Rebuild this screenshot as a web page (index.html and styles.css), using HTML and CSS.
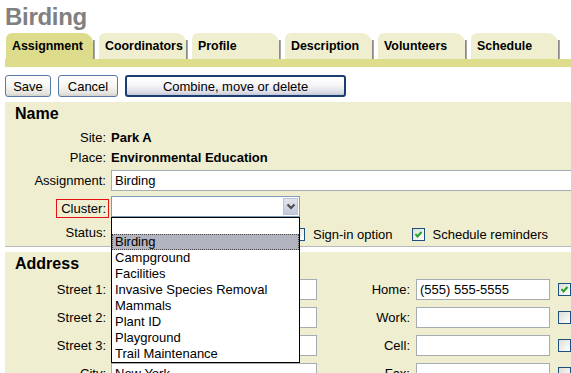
FILE: index.html
```html
<!DOCTYPE html>
<html>
<head>
<meta charset="utf-8">
<title>Birding</title>
<link rel="stylesheet" href="styles.css">
</head>
<body>
<h1 class="title">Birding</h1>
<nav class="tabs">
  <div class="tab active">Assignment</div>
  <div class="tab">Coordinators</div>
  <div class="tab">Profile</div>
  <div class="tab">Description</div>
  <div class="tab">Volunteers</div>
  <div class="tab">Schedule</div>
</nav>
<div class="tabbar"></div>
<div class="actions">
  <button class="btn btn-save">Save</button>
  <button class="btn btn-cancel">Cancel</button>
  <button class="btn btn-default">Combine, move or delete</button>
</div>
<section class="panel panel-name">
  <h2 class="panel-title">Name</h2>
  <div class="row text-row"><span class="label">Site:</span><span class="value">Park A</span></div>
  <div class="row text-row"><span class="label">Place:</span><span class="value">Environmental Education</span></div>
  <div class="row field-row"><span class="label">Assignment:</span><input class="input input-wide" value="Birding"></div>
  <div class="row field-row">
    <span class="label"><span class="label-error">Cluster:</span></span>
    <div class="select-wrap">
      <div class="select"><span class="select-btn"><svg width="10" height="7" viewBox="0 0 10 7"><polyline points="1.5,1.5 5,5 8.5,1.5" fill="none" stroke="#4a4a4a" stroke-width="2"/></svg></span></div>
      <ul class="dropdown">
        <li class="opt"></li>
        <li class="opt selected">Birding</li>
        <li class="opt">Campground</li>
        <li class="opt">Facilities</li>
        <li class="opt">Invasive Species Removal</li>
        <li class="opt">Mammals</li>
        <li class="opt">Plant ID</li>
        <li class="opt">Playground</li>
        <li class="opt">Trail Maintenance</li>
      </ul>
    </div>
  </div>
  <div class="row field-row">
    <span class="label">Status:</span>
    <div class="status-select"></div>
    <span class="check check-signin"></span><span class="check-label">Sign-in option</span>
    <span class="check checked check-sched"><svg width="11" height="11" viewBox="0 0 11 11"><polyline points="2.5,5 4.5,7.5 8.5,3" fill="none" stroke="#21a121" stroke-width="2"/></svg></span><span class="check-label">Schedule reminders</span>
  </div>
</section>
<section class="panel panel-address">
  <h2 class="panel-title">Address</h2>
  <div class="addr-grid">
    <span class="label">Street 1:</span><input class="input input-street">
    <span class="label">Home:</span><input class="input input-phone" value="(555) 555-5555">
    <span class="check checked check-phone"><svg width="11" height="11" viewBox="0 0 11 11"><polyline points="2.5,5 4.5,7.5 8.5,3" fill="none" stroke="#21a121" stroke-width="2"/></svg></span>

    <span class="label">Street 2:</span><input class="input input-street">
    <span class="label">Work:</span><input class="input input-phone">
    <span class="check check-phone"></span>

    <span class="label">Street 3:</span><input class="input input-street">
    <span class="label">Cell:</span><input class="input input-phone">
    <span class="check check-phone"></span>

    <span class="label">City:</span><input class="input input-street" value="New York">
    <span class="label">Fax:</span><input class="input input-phone">
    <span class="check check-phone"></span>
  </div>
</section>
</body>
</html>
```
FILE: styles.css
```css
html, body {
  margin: 0;
  padding: 0;
  overflow: hidden;
}
body {
  width: 571px;
  height: 373px;
  font-family: "Liberation Sans", Arial, sans-serif;
  font-size: 13px;
  color: #000;
  background: #fff;
}
.title {
  margin: 4px 0 0 5px;
  font-size: 24px;
  line-height: 26px;
  letter-spacing: -0.3px;
  font-weight: bold;
  color: #808080;
}
.tabs {
  display: flex;
  gap: 6px;
  margin: 3px 0 0 6px;
  height: 26px;
}
.tab {
  position: relative;
  width: 87px;
  height: 26px;
  box-sizing: border-box;
  padding-left: 6px;
  background: #efefd0;
  border-radius: 6px 10px 0 0;
  font-weight: bold;
  font-size: 12.4px;
  line-height: 26px;
  white-space: nowrap;
  overflow: visible;
}
.tab::after {
  content: "";
  position: absolute;
  right: -2px;
  top: 7px;
  bottom: 0;
  width: 2px;
  background: linear-gradient(to right, #7c7c7c, #b4b4b4);
}
.tab.active {
  background: #dcdc8c;
}
.tabbar {
  margin-left: 5px;
  height: 8px;
  background: #dedd8b;
}
.actions {
  display: flex;
  gap: 7px;
  margin: 8px 0 0 5px;
}
.btn {
  height: 22px;
  box-sizing: border-box;
  padding: 0;
  font-family: "Liberation Sans", Arial, sans-serif;
  font-size: 13px;
  color: #000;
  border: 1px solid #5a7aa8;
  border-radius: 3px;
  background: linear-gradient(#ffffff 0%, #f7f7f4 45%, #e6e5df 85%, #d2d1ca 100%);
}
.btn-save { width: 46px; }
.btn-cancel { width: 60px; }
.btn-default {
  width: 221px;
  border: 2px solid #1b3d72;
  background: linear-gradient(#ffffff 0%, #f6f6f8 45%, #dcdce6 85%, #c5c6d6 100%);
}
.panel {
  position: relative;
  margin: 5px 0 0 5px;
  background: #efeed1;
}
.panel-name {
  z-index: 2;
  padding-bottom: 1px;
  border-bottom: 1px solid #b9b9b9;
}
.panel-address {
  z-index: 1;
  height: 130px;
}
.panel-title {
  margin: 0 0 3px 0;
  padding: 2px 0 0 10px;
  font-size: 16px;
  line-height: 20px;
  font-weight: bold;
}
.row {
  display: flex;
  align-items: center;
}
.text-row { height: 20px; }
.field-row { height: 26px; }
.label {
  width: 101px;
  flex: none;
  text-align: right;
  white-space: nowrap;
}
.value {
  margin-left: 5px;
  font-weight: bold;
}
.label-error {
  display: inline-block;
  margin-top: 4px;
  margin-right: -3px;
  padding: 1px 2px 1px 4px;
  line-height: 15px;
  border: 1px solid #e81010;
}
.input {
  height: 21px;
  box-sizing: border-box;
  margin: 0;
  padding: 0 3px;
  border: 1px solid #a5acb2;
  background: #fff;
  font-family: "Liberation Sans", Arial, sans-serif;
  font-size: 13px;
  color: #000;
  outline: none;
}
.input-wide {
  margin-left: 5px;
  width: 470px;
  flex: none;
}
.select-wrap {
  position: relative;
  margin-left: 5px;
  width: 189px;
}
.select {
  height: 21px;
  box-sizing: border-box;
  border: 1px solid #7f9db9;
  background: #fff;
  display: flex;
  justify-content: flex-end;
  padding: 1px;
}
.select-btn {
  width: 15px;
  box-sizing: border-box;
  border: 1px solid #b9c2d8;
  background: linear-gradient(#e2e5ee, #c4c8d8);
  display: flex;
  align-items: center;
  justify-content: center;
}
.dropdown {
  position: absolute;
  left: 0;
  top: 21px;
  width: 189px;
  box-sizing: border-box;
  margin: 0;
  padding: 0;
  list-style: none;
  background: #fff;
  border: 1px solid #000;
  z-index: 10;
}
.opt {
  height: 16px;
  line-height: 16px;
  padding-left: 3px;
  box-sizing: border-box;
  white-space: nowrap;
}
.opt.selected {
  background: #b1b3bf;
  outline: 1px dotted #444;
  outline-offset: -1px;
}
.status-select {
  width: 181px;
  flex: none;
  margin-left: 5px;
}
.check {
  width: 13px;
  height: 13px;
  box-sizing: border-box;
  flex: none;
  border: 1px solid #1c5180;
  background: linear-gradient(135deg, #dcdcd7, #ffffff);
  display: inline-flex;
  align-items: center;
  justify-content: center;
}
.row .check, .row .check-label {
  margin-top: 4px;
}
.check-label {
  margin-left: 8px;
  white-space: nowrap;
}
.check-sched {
  margin-left: 19px;
}
.addr-grid {
  display: grid;
  grid-template-columns: 101px 211px 93px 140px 21px;
  grid-auto-rows: 28px;
  align-items: center;
  margin-top: -2px;
}
.addr-grid .label {
  width: auto;
}
.input-street {
  margin-left: 5px;
  width: 206px;
}
.input-phone {
  margin-left: 6px;
  width: 134px;
}
.check-phone {
  margin-left: 8px;
}
```
